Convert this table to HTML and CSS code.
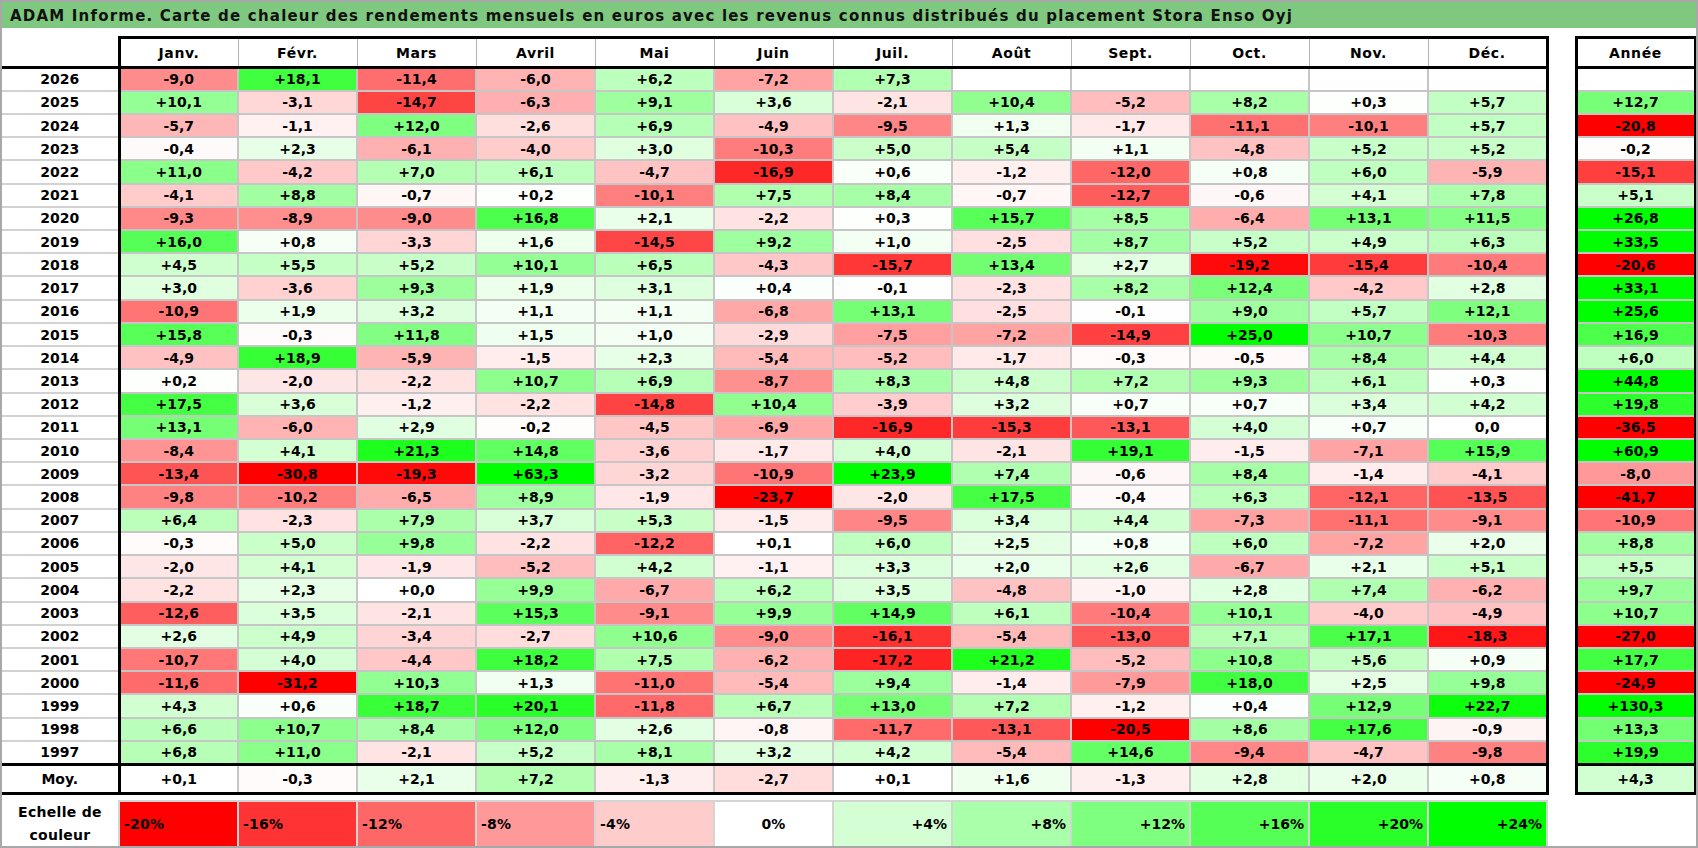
FILE: index.html
```html
<!DOCTYPE html>
<html lang="fr">
<head>
<meta charset="utf-8">
<title>ADAM Informe – Carte de chaleur Stora Enso Oyj</title>
<link rel="stylesheet" href="styles.css">
</head>
<body>
<div class="sheet">
  <div class="title">ADAM Informe. Carte de chaleur des rendements mensuels en euros avec les revenus connus distribués du placement Stora Enso Oyj</div>
  <table class="heat">
    <colgroup>
      <col class="c-year">
      <col class="c-m"><col class="c-m"><col class="c-m"><col class="c-m"><col class="c-m"><col class="c-m">
      <col class="c-m"><col class="c-m"><col class="c-m"><col class="c-m"><col class="c-m"><col class="c-m">
      <col class="c-gap">
      <col class="c-tot">
    </colgroup>
    <thead>
      <tr class="head">
        <th class="corner"></th>
        <th class="mh">Janv.</th><th class="mh">Févr.</th><th class="mh">Mars</th><th class="mh">Avril</th><th class="mh">Mai</th><th class="mh">Juin</th>
        <th class="mh">Juil.</th><th class="mh">Août</th><th class="mh">Sept.</th><th class="mh">Oct.</th><th class="mh">Nov.</th><th class="mh">Déc.</th>
        <th class="gap"></th>
        <th class="yh">Année</th>
      </tr>
    </thead>
    <tbody>
      <tr><th class="yr">2026</th><td style="--v:-9.0">-9,0</td><td style="--v:18.1">+18,1</td><td style="--v:-11.4">-11,4</td><td style="--v:-6.0">-6,0</td><td style="--v:6.2">+6,2</td><td style="--v:-7.2">-7,2</td><td style="--v:7.3">+7,3</td><td></td><td></td><td></td><td></td><td></td><td class="gap"></td><td class="tot"></td></tr>
      <tr><th class="yr">2025</th><td style="--v:10.1">+10,1</td><td style="--v:-3.1">-3,1</td><td style="--v:-14.7">-14,7</td><td style="--v:-6.3">-6,3</td><td style="--v:9.1">+9,1</td><td style="--v:3.6">+3,6</td><td style="--v:-2.1">-2,1</td><td style="--v:10.4">+10,4</td><td style="--v:-5.2">-5,2</td><td style="--v:8.2">+8,2</td><td style="--v:0.3">+0,3</td><td style="--v:5.7">+5,7</td><td class="gap"></td><td class="tot" style="--v:12.7">+12,7</td></tr>
      <tr><th class="yr">2024</th><td style="--v:-5.7">-5,7</td><td style="--v:-1.1">-1,1</td><td style="--v:12.0">+12,0</td><td style="--v:-2.6">-2,6</td><td style="--v:6.9">+6,9</td><td style="--v:-4.9">-4,9</td><td style="--v:-9.5">-9,5</td><td style="--v:1.3">+1,3</td><td style="--v:-1.7">-1,7</td><td style="--v:-11.1">-11,1</td><td style="--v:-10.1">-10,1</td><td style="--v:5.7">+5,7</td><td class="gap"></td><td class="tot" style="--v:-20.8">-20,8</td></tr>
      <tr><th class="yr">2023</th><td style="--v:-0.4">-0,4</td><td style="--v:2.3">+2,3</td><td style="--v:-6.1">-6,1</td><td style="--v:-4.0">-4,0</td><td style="--v:3.0">+3,0</td><td style="--v:-10.3">-10,3</td><td style="--v:5.0">+5,0</td><td style="--v:5.4">+5,4</td><td style="--v:1.1">+1,1</td><td style="--v:-4.8">-4,8</td><td style="--v:5.2">+5,2</td><td style="--v:5.2">+5,2</td><td class="gap"></td><td class="tot" style="--v:-0.2">-0,2</td></tr>
      <tr><th class="yr">2022</th><td style="--v:11.0">+11,0</td><td style="--v:-4.2">-4,2</td><td style="--v:7.0">+7,0</td><td style="--v:6.1">+6,1</td><td style="--v:-4.7">-4,7</td><td style="--v:-16.9">-16,9</td><td style="--v:0.6">+0,6</td><td style="--v:-1.2">-1,2</td><td style="--v:-12.0">-12,0</td><td style="--v:0.8">+0,8</td><td style="--v:6.0">+6,0</td><td style="--v:-5.9">-5,9</td><td class="gap"></td><td class="tot" style="--v:-15.1">-15,1</td></tr>
      <tr><th class="yr">2021</th><td style="--v:-4.1">-4,1</td><td style="--v:8.8">+8,8</td><td style="--v:-0.7">-0,7</td><td style="--v:0.2">+0,2</td><td style="--v:-10.1">-10,1</td><td style="--v:7.5">+7,5</td><td style="--v:8.4">+8,4</td><td style="--v:-0.7">-0,7</td><td style="--v:-12.7">-12,7</td><td style="--v:-0.6">-0,6</td><td style="--v:4.1">+4,1</td><td style="--v:7.8">+7,8</td><td class="gap"></td><td class="tot" style="--v:5.1">+5,1</td></tr>
      <tr><th class="yr">2020</th><td style="--v:-9.3">-9,3</td><td style="--v:-8.9">-8,9</td><td style="--v:-9.0">-9,0</td><td style="--v:16.8">+16,8</td><td style="--v:2.1">+2,1</td><td style="--v:-2.2">-2,2</td><td style="--v:0.3">+0,3</td><td style="--v:15.7">+15,7</td><td style="--v:8.5">+8,5</td><td style="--v:-6.4">-6,4</td><td style="--v:13.1">+13,1</td><td style="--v:11.5">+11,5</td><td class="gap"></td><td class="tot" style="--v:26.8">+26,8</td></tr>
      <tr><th class="yr">2019</th><td style="--v:16.0">+16,0</td><td style="--v:0.8">+0,8</td><td style="--v:-3.3">-3,3</td><td style="--v:1.6">+1,6</td><td style="--v:-14.5">-14,5</td><td style="--v:9.2">+9,2</td><td style="--v:1.0">+1,0</td><td style="--v:-2.5">-2,5</td><td style="--v:8.7">+8,7</td><td style="--v:5.2">+5,2</td><td style="--v:4.9">+4,9</td><td style="--v:6.3">+6,3</td><td class="gap"></td><td class="tot" style="--v:33.5">+33,5</td></tr>
      <tr><th class="yr">2018</th><td style="--v:4.5">+4,5</td><td style="--v:5.5">+5,5</td><td style="--v:5.2">+5,2</td><td style="--v:10.1">+10,1</td><td style="--v:6.5">+6,5</td><td style="--v:-4.3">-4,3</td><td style="--v:-15.7">-15,7</td><td style="--v:13.4">+13,4</td><td style="--v:2.7">+2,7</td><td style="--v:-19.2">-19,2</td><td style="--v:-15.4">-15,4</td><td style="--v:-10.4">-10,4</td><td class="gap"></td><td class="tot" style="--v:-20.6">-20,6</td></tr>
      <tr><th class="yr">2017</th><td style="--v:3.0">+3,0</td><td style="--v:-3.6">-3,6</td><td style="--v:9.3">+9,3</td><td style="--v:1.9">+1,9</td><td style="--v:3.1">+3,1</td><td style="--v:0.4">+0,4</td><td style="--v:-0.1">-0,1</td><td style="--v:-2.3">-2,3</td><td style="--v:8.2">+8,2</td><td style="--v:12.4">+12,4</td><td style="--v:-4.2">-4,2</td><td style="--v:2.8">+2,8</td><td class="gap"></td><td class="tot" style="--v:33.1">+33,1</td></tr>
      <tr><th class="yr">2016</th><td style="--v:-10.9">-10,9</td><td style="--v:1.9">+1,9</td><td style="--v:3.2">+3,2</td><td style="--v:1.1">+1,1</td><td style="--v:1.1">+1,1</td><td style="--v:-6.8">-6,8</td><td style="--v:13.1">+13,1</td><td style="--v:-2.5">-2,5</td><td style="--v:-0.1">-0,1</td><td style="--v:9.0">+9,0</td><td style="--v:5.7">+5,7</td><td style="--v:12.1">+12,1</td><td class="gap"></td><td class="tot" style="--v:25.6">+25,6</td></tr>
      <tr><th class="yr">2015</th><td style="--v:15.8">+15,8</td><td style="--v:-0.3">-0,3</td><td style="--v:11.8">+11,8</td><td style="--v:1.5">+1,5</td><td style="--v:1.0">+1,0</td><td style="--v:-2.9">-2,9</td><td style="--v:-7.5">-7,5</td><td style="--v:-7.2">-7,2</td><td style="--v:-14.9">-14,9</td><td style="--v:25.0">+25,0</td><td style="--v:10.7">+10,7</td><td style="--v:-10.3">-10,3</td><td class="gap"></td><td class="tot" style="--v:16.9">+16,9</td></tr>
      <tr><th class="yr">2014</th><td style="--v:-4.9">-4,9</td><td style="--v:18.9">+18,9</td><td style="--v:-5.9">-5,9</td><td style="--v:-1.5">-1,5</td><td style="--v:2.3">+2,3</td><td style="--v:-5.4">-5,4</td><td style="--v:-5.2">-5,2</td><td style="--v:-1.7">-1,7</td><td style="--v:-0.3">-0,3</td><td style="--v:-0.5">-0,5</td><td style="--v:8.4">+8,4</td><td style="--v:4.4">+4,4</td><td class="gap"></td><td class="tot" style="--v:6.0">+6,0</td></tr>
      <tr><th class="yr">2013</th><td style="--v:0.2">+0,2</td><td style="--v:-2.0">-2,0</td><td style="--v:-2.2">-2,2</td><td style="--v:10.7">+10,7</td><td style="--v:6.9">+6,9</td><td style="--v:-8.7">-8,7</td><td style="--v:8.3">+8,3</td><td style="--v:4.8">+4,8</td><td style="--v:7.2">+7,2</td><td style="--v:9.3">+9,3</td><td style="--v:6.1">+6,1</td><td style="--v:0.3">+0,3</td><td class="gap"></td><td class="tot" style="--v:44.8">+44,8</td></tr>
      <tr><th class="yr">2012</th><td style="--v:17.5">+17,5</td><td style="--v:3.6">+3,6</td><td style="--v:-1.2">-1,2</td><td style="--v:-2.2">-2,2</td><td style="--v:-14.8">-14,8</td><td style="--v:10.4">+10,4</td><td style="--v:-3.9">-3,9</td><td style="--v:3.2">+3,2</td><td style="--v:0.7">+0,7</td><td style="--v:0.7">+0,7</td><td style="--v:3.4">+3,4</td><td style="--v:4.2">+4,2</td><td class="gap"></td><td class="tot" style="--v:19.8">+19,8</td></tr>
      <tr><th class="yr">2011</th><td style="--v:13.1">+13,1</td><td style="--v:-6.0">-6,0</td><td style="--v:2.9">+2,9</td><td style="--v:-0.2">-0,2</td><td style="--v:-4.5">-4,5</td><td style="--v:-6.9">-6,9</td><td style="--v:-16.9">-16,9</td><td style="--v:-15.3">-15,3</td><td style="--v:-13.1">-13,1</td><td style="--v:4.0">+4,0</td><td style="--v:0.7">+0,7</td><td style="--v:0">0,0</td><td class="gap"></td><td class="tot" style="--v:-36.5">-36,5</td></tr>
      <tr><th class="yr">2010</th><td style="--v:-8.4">-8,4</td><td style="--v:4.1">+4,1</td><td style="--v:21.3">+21,3</td><td style="--v:14.8">+14,8</td><td style="--v:-3.6">-3,6</td><td style="--v:-1.7">-1,7</td><td style="--v:4.0">+4,0</td><td style="--v:-2.1">-2,1</td><td style="--v:19.1">+19,1</td><td style="--v:-1.5">-1,5</td><td style="--v:-7.1">-7,1</td><td style="--v:15.9">+15,9</td><td class="gap"></td><td class="tot" style="--v:60.9">+60,9</td></tr>
      <tr><th class="yr">2009</th><td style="--v:-13.4">-13,4</td><td style="--v:-30.8">-30,8</td><td style="--v:-19.3">-19,3</td><td style="--v:63.3">+63,3</td><td style="--v:-3.2">-3,2</td><td style="--v:-10.9">-10,9</td><td style="--v:23.9">+23,9</td><td style="--v:7.4">+7,4</td><td style="--v:-0.6">-0,6</td><td style="--v:8.4">+8,4</td><td style="--v:-1.4">-1,4</td><td style="--v:-4.1">-4,1</td><td class="gap"></td><td class="tot" style="--v:-8.0">-8,0</td></tr>
      <tr><th class="yr">2008</th><td style="--v:-9.8">-9,8</td><td style="--v:-10.2">-10,2</td><td style="--v:-6.5">-6,5</td><td style="--v:8.9">+8,9</td><td style="--v:-1.9">-1,9</td><td style="--v:-23.7">-23,7</td><td style="--v:-2.0">-2,0</td><td style="--v:17.5">+17,5</td><td style="--v:-0.4">-0,4</td><td style="--v:6.3">+6,3</td><td style="--v:-12.1">-12,1</td><td style="--v:-13.5">-13,5</td><td class="gap"></td><td class="tot" style="--v:-41.7">-41,7</td></tr>
      <tr><th class="yr">2007</th><td style="--v:6.4">+6,4</td><td style="--v:-2.3">-2,3</td><td style="--v:7.9">+7,9</td><td style="--v:3.7">+3,7</td><td style="--v:5.3">+5,3</td><td style="--v:-1.5">-1,5</td><td style="--v:-9.5">-9,5</td><td style="--v:3.4">+3,4</td><td style="--v:4.4">+4,4</td><td style="--v:-7.3">-7,3</td><td style="--v:-11.1">-11,1</td><td style="--v:-9.1">-9,1</td><td class="gap"></td><td class="tot" style="--v:-10.9">-10,9</td></tr>
      <tr><th class="yr">2006</th><td style="--v:-0.3">-0,3</td><td style="--v:5.0">+5,0</td><td style="--v:9.8">+9,8</td><td style="--v:-2.2">-2,2</td><td style="--v:-12.2">-12,2</td><td style="--v:0.1">+0,1</td><td style="--v:6.0">+6,0</td><td style="--v:2.5">+2,5</td><td style="--v:0.8">+0,8</td><td style="--v:6.0">+6,0</td><td style="--v:-7.2">-7,2</td><td style="--v:2.0">+2,0</td><td class="gap"></td><td class="tot" style="--v:8.8">+8,8</td></tr>
      <tr><th class="yr">2005</th><td style="--v:-2.0">-2,0</td><td style="--v:4.1">+4,1</td><td style="--v:-1.9">-1,9</td><td style="--v:-5.2">-5,2</td><td style="--v:4.2">+4,2</td><td style="--v:-1.1">-1,1</td><td style="--v:3.3">+3,3</td><td style="--v:2.0">+2,0</td><td style="--v:2.6">+2,6</td><td style="--v:-6.7">-6,7</td><td style="--v:2.1">+2,1</td><td style="--v:5.1">+5,1</td><td class="gap"></td><td class="tot" style="--v:5.5">+5,5</td></tr>
      <tr><th class="yr">2004</th><td style="--v:-2.2">-2,2</td><td style="--v:2.3">+2,3</td><td style="--v:0">+0,0</td><td style="--v:9.9">+9,9</td><td style="--v:-6.7">-6,7</td><td style="--v:6.2">+6,2</td><td style="--v:3.5">+3,5</td><td style="--v:-4.8">-4,8</td><td style="--v:-1.0">-1,0</td><td style="--v:2.8">+2,8</td><td style="--v:7.4">+7,4</td><td style="--v:-6.2">-6,2</td><td class="gap"></td><td class="tot" style="--v:9.7">+9,7</td></tr>
      <tr><th class="yr">2003</th><td style="--v:-12.6">-12,6</td><td style="--v:3.5">+3,5</td><td style="--v:-2.1">-2,1</td><td style="--v:15.3">+15,3</td><td style="--v:-9.1">-9,1</td><td style="--v:9.9">+9,9</td><td style="--v:14.9">+14,9</td><td style="--v:6.1">+6,1</td><td style="--v:-10.4">-10,4</td><td style="--v:10.1">+10,1</td><td style="--v:-4.0">-4,0</td><td style="--v:-4.9">-4,9</td><td class="gap"></td><td class="tot" style="--v:10.7">+10,7</td></tr>
      <tr><th class="yr">2002</th><td style="--v:2.6">+2,6</td><td style="--v:4.9">+4,9</td><td style="--v:-3.4">-3,4</td><td style="--v:-2.7">-2,7</td><td style="--v:10.6">+10,6</td><td style="--v:-9.0">-9,0</td><td style="--v:-16.1">-16,1</td><td style="--v:-5.4">-5,4</td><td style="--v:-13.0">-13,0</td><td style="--v:7.1">+7,1</td><td style="--v:17.1">+17,1</td><td style="--v:-18.3">-18,3</td><td class="gap"></td><td class="tot" style="--v:-27.0">-27,0</td></tr>
      <tr><th class="yr">2001</th><td style="--v:-10.7">-10,7</td><td style="--v:4.0">+4,0</td><td style="--v:-4.4">-4,4</td><td style="--v:18.2">+18,2</td><td style="--v:7.5">+7,5</td><td style="--v:-6.2">-6,2</td><td style="--v:-17.2">-17,2</td><td style="--v:21.2">+21,2</td><td style="--v:-5.2">-5,2</td><td style="--v:10.8">+10,8</td><td style="--v:5.6">+5,6</td><td style="--v:0.9">+0,9</td><td class="gap"></td><td class="tot" style="--v:17.7">+17,7</td></tr>
      <tr><th class="yr">2000</th><td style="--v:-11.6">-11,6</td><td style="--v:-31.2">-31,2</td><td style="--v:10.3">+10,3</td><td style="--v:1.3">+1,3</td><td style="--v:-11.0">-11,0</td><td style="--v:-5.4">-5,4</td><td style="--v:9.4">+9,4</td><td style="--v:-1.4">-1,4</td><td style="--v:-7.9">-7,9</td><td style="--v:18.0">+18,0</td><td style="--v:2.5">+2,5</td><td style="--v:9.8">+9,8</td><td class="gap"></td><td class="tot" style="--v:-24.9">-24,9</td></tr>
      <tr><th class="yr">1999</th><td style="--v:4.3">+4,3</td><td style="--v:0.6">+0,6</td><td style="--v:18.7">+18,7</td><td style="--v:20.1">+20,1</td><td style="--v:-11.8">-11,8</td><td style="--v:6.7">+6,7</td><td style="--v:13.0">+13,0</td><td style="--v:7.2">+7,2</td><td style="--v:-1.2">-1,2</td><td style="--v:0.4">+0,4</td><td style="--v:12.9">+12,9</td><td style="--v:22.7">+22,7</td><td class="gap"></td><td class="tot" style="--v:130.3">+130,3</td></tr>
      <tr><th class="yr">1998</th><td style="--v:6.6">+6,6</td><td style="--v:10.7">+10,7</td><td style="--v:8.4">+8,4</td><td style="--v:12.0">+12,0</td><td style="--v:2.6">+2,6</td><td style="--v:-0.8">-0,8</td><td style="--v:-11.7">-11,7</td><td style="--v:-13.1">-13,1</td><td style="--v:-20.5">-20,5</td><td style="--v:8.6">+8,6</td><td style="--v:17.6">+17,6</td><td style="--v:-0.9">-0,9</td><td class="gap"></td><td class="tot" style="--v:13.3">+13,3</td></tr>
      <tr><th class="yr">1997</th><td style="--v:6.8">+6,8</td><td style="--v:11.0">+11,0</td><td style="--v:-2.1">-2,1</td><td style="--v:5.2">+5,2</td><td style="--v:8.1">+8,1</td><td style="--v:3.2">+3,2</td><td style="--v:4.2">+4,2</td><td style="--v:-5.4">-5,4</td><td style="--v:14.6">+14,6</td><td style="--v:-9.4">-9,4</td><td style="--v:-4.7">-4,7</td><td style="--v:-9.8">-9,8</td><td class="gap"></td><td class="tot" style="--v:19.9">+19,9</td></tr>
    </tbody>
    <tfoot>
      <tr class="avg"><th class="yr">Moy.</th><td style="--v:0.1">+0,1</td><td style="--v:-0.3">-0,3</td><td style="--v:2.1">+2,1</td><td style="--v:7.2">+7,2</td><td style="--v:-1.3">-1,3</td><td style="--v:-2.7">-2,7</td><td style="--v:0.1">+0,1</td><td style="--v:1.6">+1,6</td><td style="--v:-1.3">-1,3</td><td style="--v:2.8">+2,8</td><td style="--v:2.0">+2,0</td><td style="--v:0.8">+0,8</td><td class="gap"></td><td class="tot" style="--v:4.3">+4,3</td></tr>
      <tr class="spacer"><td colspan="15"></td></tr>
      <tr class="scale">
        <th class="lbl">Echelle de<br>couleur</th>
        <td class="neg" style="--v:-20">-20%</td>
        <td class="neg" style="--v:-16">-16%</td>
        <td class="neg" style="--v:-12">-12%</td>
        <td class="neg" style="--v:-8">-8%</td>
        <td class="neg" style="--v:-4">-4%</td>
        <td class="zero" style="--v:0">0%</td>
        <td class="pos" style="--v:4">+4%</td>
        <td class="pos" style="--v:8">+8%</td>
        <td class="pos" style="--v:12">+12%</td>
        <td class="pos" style="--v:16">+16%</td>
        <td class="pos" style="--v:20">+20%</td>
        <td class="pos" style="--v:24">+24%</td>
        <td class="gap"></td>
        <td class="blank"></td>
      </tr>
    </tfoot>
  </table>
</div>
</body>
</html>
```

FILE: styles.css
```css
* { box-sizing: border-box; }

html, body {
  margin: 0;
  padding: 0;
  background: #ffffff;
}

.sheet {
  width: 1698px;
  height: 848px;
  border: 2px solid #a8a8a8;
  background: #ffffff;
  overflow: hidden;
}

.title {
  height: 26px;
  background: #7fc87f;
  padding: 3px 0 0 8px;
  font-family: "DejaVu Sans", "Liberation Sans", sans-serif;
  font-weight: bold;
  font-size: 15px;
  letter-spacing: 1.2px;
  line-height: 22px;
  color: #111111;
  white-space: nowrap;
}

.heat {
  margin-top: 8px;
  border-collapse: collapse;
  table-layout: fixed;
  width: 1693px;
}

.c-year { width: 117px; }
.c-m { width: 119px; }
.c-gap { width: 29px; }
.c-tot { width: 119px; }

.heat th,
.heat td {
  --v: 0;
  padding: 0;
  text-align: center;
  vertical-align: middle;
  font-family: "DejaVu Sans", "Liberation Sans", sans-serif;
  font-weight: bold;
  font-size: 14px;
  color: #000000;
  white-space: nowrap;
  border: 2px solid #c6c6c6;
  overflow: hidden;
}

.heat tbody td,
.heat .avg td,
.heat .scale td {
  background: color-mix(in srgb,
    #ff0000 clamp(0%, calc(var(--v) * -5%), 100%),
    color-mix(in srgb, #00ff00 clamp(0%, calc(var(--v) * 4.1667%), 100%), #ffffff));
}

/* header */
.head { height: 30px; }
.heat .corner {
  border-top: none;
  border-left: none;
  border-right: 3px solid #000;
  border-bottom: 3px solid #000;
}
.heat .mh {
  border-top: 3px solid #000;
  border-bottom: 3px solid #000;
  border-left: 1px solid #b4b4b4;
  border-right: 1px solid #b4b4b4;
  letter-spacing: 0.6px;
}
.heat .mh:nth-child(13) { border-right: 3px solid #000; }
.heat .yh {
  border: 3px solid #000;
  letter-spacing: 0.6px;
}

/* body rows */
.heat tbody tr { height: 23.233px; }
.heat .yr {
  border-left: none;
  border-right: 3px solid #000;
  border-top: 2px solid #d2d2d2;
  border-bottom: 2px solid #d2d2d2;
}
.heat tbody td:nth-child(13),
.heat .avg td:nth-child(13) { border-right: 3px solid #000; }
.heat .tot {
  border-left: 3px solid #000;
  border-right: 3px solid #000;
}
.heat td.gap,
.heat th.gap {
  border: none;
  background: #ffffff;
}

/* average row */
.heat .avg { height: 29px; }
.heat .avg th,
.heat .avg td:not(.gap) {
  border-top: 3px solid #000;
  border-bottom: 3px solid #000;
}

/* spacer */
.heat .spacer { height: 8px; }
.heat .spacer td { border: none; background: #ffffff; }

/* colour scale */
.heat .scale { height: 44px; }
.heat .scale td {
  border: 2px solid #d4d4d4;
}
.heat .scale .lbl {
  border: none;
  line-height: 23px;
  letter-spacing: 0.3px;
}
.heat .scale .neg {
  text-align: left;
  padding-left: 4px;
  letter-spacing: 0.2px;
}
.heat .scale .pos {
  text-align: right;
  padding-right: 4px;
}
.heat .scale .zero { text-align: center; }
.heat .scale td.gap,
.heat .scale td.blank {
  border: none;
  background: #ffffff;
}
```
